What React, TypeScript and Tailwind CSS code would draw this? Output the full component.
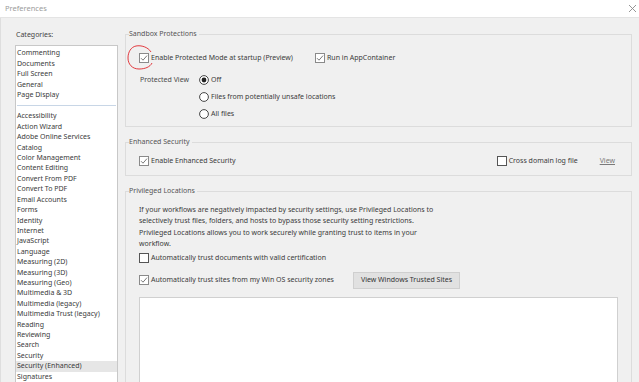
import React from "react";

const topCats = ["Commenting", "Documents", "Full Screen", "General", "Page Display"];

const cats = [
  "Accessibility",
  "Action Wizard",
  "Adobe Online Services",
  "Catalog",
  "Color Management",
  "Content Editing",
  "Convert From PDF",
  "Convert To PDF",
  "Email Accounts",
  "Forms",
  "Identity",
  "Internet",
  "JavaScript",
  "Language",
  "Measuring (2D)",
  "Measuring (3D)",
  "Measuring (Geo)",
  "Multimedia & 3D",
  "Multimedia (legacy)",
  "Multimedia Trust (legacy)",
  "Reading",
  "Reviewing",
  "Search",
  "Security",
  "Security (Enhanced)",
  "Signatures",
];

const Check = ({ checked }: { checked?: boolean }) => (
  <svg width="10" height="10" viewBox="0 0 10 10" className="shrink-0">
    <rect x="0.5" y="0.5" width="9" height="9" fill="#fff" stroke={checked ? "#8a8a8a" : "#555"} />
    {checked && <path d="M2 5.2 L4 7.2 L8 2.6" fill="none" stroke="#7a7a7a" strokeWidth="1" />}
  </svg>
);

const Radio = ({ on }: { on?: boolean }) => (
  <svg width="10" height="10" viewBox="0 0 10 10" className="shrink-0">
    <circle cx="5" cy="5" r="4.4" fill="#fff" stroke="#333" strokeWidth="0.9" />
    {on && <circle cx="5" cy="5" r="2.4" fill="#222" />}
  </svg>
);

const Group = ({ title, className, children }: { title: string; className?: string; children: React.ReactNode }) => (
  <fieldset className={`border border-[#dcdcdc] px-[13px] ${className ?? ""}`}>
    <legend className="-ml-[10px] pr-[2px] text-[#555] leading-[10px]">{title}</legend>
    {children}
  </fieldset>
);

export default function App() {
  return (
    <div
      className="w-[639px] h-[382px] overflow-hidden bg-[#f0f0f0] flex flex-col text-[7px] text-[#3a3a3a]"
      style={{ fontFamily: '"Noto Sans", "Open Sans", sans-serif' }}
    >
      <div className="h-[18px] shrink-0 bg-white border-b border-[#e4e4e4] flex items-center justify-between pl-[5px] pr-[2px]">
        <span className="text-[#9c9c9c] text-[7.5px]">Preferences</span>
        <svg width="9" height="9" viewBox="0 0 9 9">
          <path d="M1 1 L8 8 M8 1 L1 8" stroke="#8a8a8a" strokeWidth="0.9" />
        </svg>
      </div>

      <div className="flex flex-1 min-h-0 border-l border-[#dedede]">
        <div className="w-[117px] shrink-0 pl-[14px] flex flex-col">
          <div className="h-[28px] flex items-end pb-[5px] pl-[1px] text-[#444]">Categories:</div>
          <div className="flex-1 bg-white border border-[#c8c8c8] border-b-0 pt-[2px] leading-[10.4px]">
            {topCats.map((c) => (
              <div key={c} className="pl-[1px]">{c}</div>
            ))}
            <div className="mx-[1px] my-[5px] border-t border-[#c8d6e6]" />
            {cats.map((c) => (
              <div key={c} className={`pl-[1px] ${c === "Security (Enhanced)" ? "bg-[#e6e6e6]" : ""}`}>
                {c}
              </div>
            ))}
          </div>
        </div>

        <div className="flex-1 pl-[7px] pr-[7px] pt-[11px] flex flex-col">
          <Group title="Sandbox Protections" className="h-[98px] shrink-0 relative">
            <div className="flex items-center mt-[14px] gap-[2px]">
              <Check checked />
              <span className="w-[162px]">Enable Protected Mode at startup (Preview)</span>
              <Check checked />
              <span>Run in AppContainer</span>
            </div>
            <div className="flex mt-[11px] pl-[1px]">
              <span className="w-[59px] text-[#4a4a4a] leading-[10px]">Protected View</span>
              <div className="flex flex-col">
                <div className="flex items-center gap-[2px]"><Radio on /><span>Off</span></div>
                <div className="flex items-center gap-[2px] mt-[7px]"><Radio /><span>Files from potentially unsafe locations</span></div>
                <div className="flex items-center gap-[2px] mt-[6px]"><Radio /><span>All files</span></div>
              </div>
            </div>
            <svg className="absolute -left-[1px] top-[4px]" width="30" height="30" viewBox="0 0 30 30">
              <path
                d="M26 9 C23 4 16 2 11 3 C6 4 3 9 3 15 C3 21 7 26 14 26 C20 26 25 24 27 20"
                fill="none"
                stroke="#e0262b"
                strokeWidth="0.9"
              />
            </svg>
          </Group>

          <Group title="Enhanced Security" className="h-[39px] shrink-0 mt-[10px]">
            <div className="flex items-center mt-[9px]">
              <Check checked />
              <span className="ml-[2px] flex-1">Enable Enhanced Security</span>
              <Check />
              <span className="ml-[2px] w-[91px]">Cross domain log file</span>
              <span className="underline text-[#7a7a7a] mr-[3px]">View</span>
            </div>
          </Group>

          <Group title="Privileged Locations" className="flex-1 min-h-0 mt-[10px] -mb-[2px]">
            <p className="mt-[8px] leading-[11.3px] w-[300px]">
              If your workflows are negatively impacted by security settings, use Privileged Locations to selectively trust
              files, folders, and hosts to bypass those security setting restrictions. Privileged Locations allows you to
              work securely while granting trust to items in your workflow.
            </p>
            <div className="flex items-center gap-[2px] mt-[4px]">
              <Check />
              <span>Automatically trust documents with valid certification</span>
            </div>
            <div className="flex items-center mt-[8px]">
              <Check checked />
              <span className="ml-[2px] w-[202px]">Automatically trust sites from my Win OS security zones</span>
              <button className="h-[17px] w-[107px] bg-[#e1e1e1] border border-[#cfcfcf] text-[#333]">
                View Windows Trusted Sites
              </button>
            </div>
            <div className="mt-[8px] h-[120px] bg-white border border-[#d0d0d0]" />
          </Group>
        </div>
      </div>
    </div>
  );
}
